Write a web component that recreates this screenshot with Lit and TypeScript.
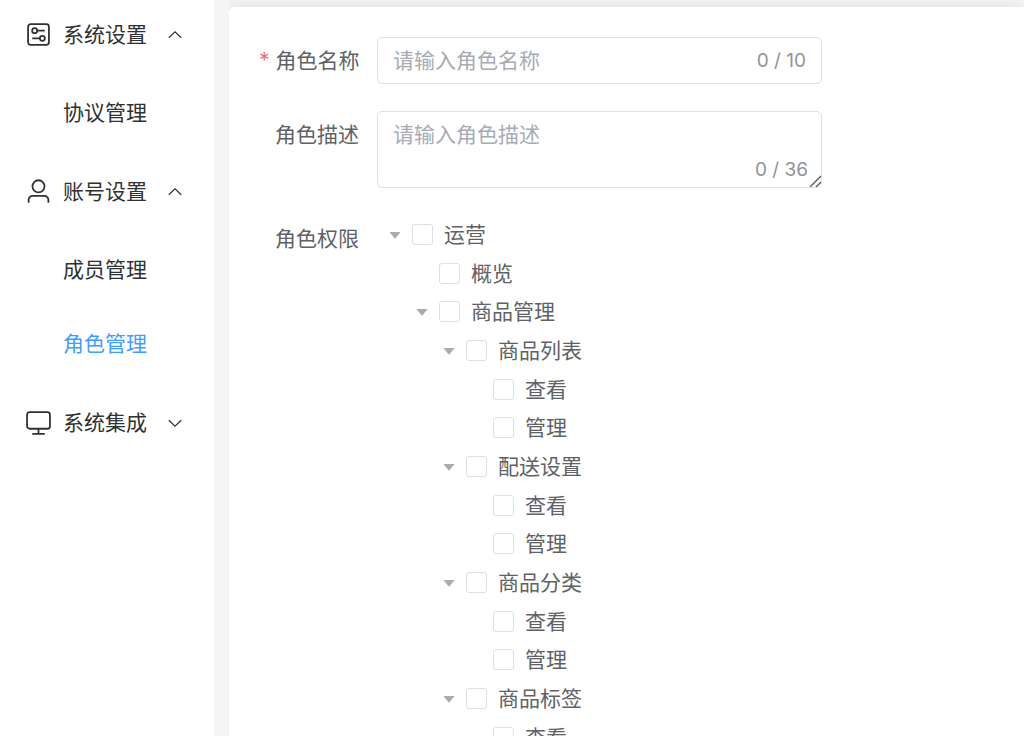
import { LitElement, html, svg, css, nothing } from "lit";
import { customElement, property, state } from "lit/decorators.js";

interface Permission {
  id: string;
  label: string;
  children?: Permission[];
}

interface MenuGroup {
  label: string;
  icon: "setup" | "user" | "monitor";
  open: boolean;
  items: string[];
}

const viewAndManage = (id: string): Permission[] => [
  { id: `${id}-view`, label: "查看" },
  { id: `${id}-manage`, label: "管理" },
];

const PERMISSIONS: Permission[] = [
  {
    id: "ops",
    label: "运营",
    children: [
      { id: "overview", label: "概览" },
      {
        id: "goods",
        label: "商品管理",
        children: [
          { id: "list", label: "商品列表", children: viewAndManage("list") },
          { id: "delivery", label: "配送设置", children: viewAndManage("delivery") },
          { id: "category", label: "商品分类", children: viewAndManage("category") },
          { id: "tag", label: "商品标签", children: viewAndManage("tag") },
        ],
      },
    ],
  },
];

const ICONS = {
  setup: svg`
    <rect x="2" y="2" width="20" height="20" rx="2.5"></rect>
    <circle cx="8.3" cy="8.3" r="2.4"></circle>
    <path d="M10.7 8.3H18M6 15.7h7.3"></path>
    <circle cx="15.7" cy="15.7" r="2.4"></circle>`,
  user: svg`
    <circle cx="12" cy="7" r="5.8"></circle>
    <path d="M2.500 22.800v-2.800a3.800 3.800 0 0 1 3.800-3.800h11.400a3.800 3.800 0 0 1 3.800 3.800v2.800"></path>`,
  monitor: svg`
    <rect x="1" y="2" width="22" height="16" rx="2.5"></rect>
    <path d="M12 18v5M6 23h12"></path>`,
};

@customElement("side-menu")
export class SideMenu extends LitElement {
  @state() private groups: MenuGroup[] = [
    { label: "系统设置", icon: "setup", open: true, items: ["协议管理"] },
    { label: "账号设置", icon: "user", open: true, items: ["成员管理", "角色管理"] },
    { label: "系统集成", icon: "monitor", open: false, items: [] },
  ];
  @state() private active = "角色管理";

  static styles = css`
    :host {
      display: block;
      background: #fff;
      overflow: hidden;
    }
    .menu {
      margin-top: -7px;
    }
    .group {
      display: flex;
      align-items: center;
      width: 100%;
      height: 83px;
      padding: 0 32px 0 26px;
      border: 0;
      background: none;
      font: inherit;
      color: #303133;
      cursor: pointer;
    }
    .text {
      padding-bottom: 4px;
    }
    .icon {
      width: 25px;
      height: 25px;
      margin-right: 12px;
      fill: none;
      stroke: currentColor;
      stroke-width: 1.7;
    }
    .arrow {
      width: 14px;
      height: 14px;
      margin-left: auto;
      fill: none;
      stroke: currentColor;
      stroke-width: 1.2;
    }
    .arrow.open {
      transform: rotate(180deg);
    }
    .item {
      display: flex;
      align-items: center;
      height: 74px;
      padding-left: 63px;
      color: #303133;
      text-decoration: none;
    }
    .item.active {
      color: #409eff;
    }
  `;

  private toggle(group: MenuGroup) {
    this.groups = this.groups.map((g) => (g === group ? { ...g, open: !g.open } : g));
  }

  render() {
    return html`<nav class="menu">
      ${this.groups.map(
        (g) => html`
          <button class="group" aria-expanded=${g.open} @click=${() => this.toggle(g)}>
            <svg class="icon" viewBox="0 0 24 24" aria-hidden="true">${ICONS[g.icon]}</svg>
            <span class="text">${g.label}</span>
            <svg class="arrow ${g.open ? "open" : ""}" viewBox="0 0 14 14" aria-hidden="true">
              <path d="M.8 4.200 7 10.200 13.200 4.200"></path>
            </svg>
          </button>
          ${g.open
            ? g.items.map(
                (item) => html`<a
                  class="item ${item === this.active ? "active" : ""}"
                  href="#"
                  @click=${() => (this.active = item)}
                  ><span class="text">${item}</span></a
                >`
              )
            : nothing}
        `
      )}
    </nav>`;
  }
}

@customElement("permission-tree")
export class PermissionTree extends LitElement {
  @property({ attribute: false }) nodes: Permission[] = [];
  @state() private collapsed = new Set<string>();

  static styles = css`
    :host {
      display: block;
    }
    .row {
      display: flex;
      align-items: center;
      height: 38px;
    }
    .toggle {
      display: flex;
      align-items: center;
      justify-content: center;
      box-sizing: border-box;
      width: 35px;
      height: 38px;
      padding: 2px 0 0;
      border: 0;
      background: none;
      cursor: pointer;
    }
    .caret {
      width: 12px;
      height: 8px;
      fill: #a8abb2;
    }
    .toggle.closed .caret {
      transform: rotate(-90deg);
    }
    .spacer {
      width: 35px;
    }
    .choice {
      display: flex;
      align-items: center;
      gap: 11px;
      cursor: pointer;
    }
    .text {
      padding-bottom: 3px;
    }
    .box {
      appearance: none;
      width: 21px;
      height: 21px;
      margin: 0;
      border: 1px solid #dcdfe6;
      border-radius: 3px;
      background: #fff;
    }
    .box:checked {
      border-color: #409eff;
      background: #409eff;
    }
    .children {
      padding: 1px 0 1px 27px;
    }
  `;

  private toggle(id: string) {
    const next = new Set(this.collapsed);
    if (!next.delete(id)) next.add(id);
    this.collapsed = next;
  }

  private renderNode(node: Permission): unknown {
    const closed = this.collapsed.has(node.id);
    return html`<div class="node">
      <div class="row">
        ${node.children
          ? html`<button
              type="button"
              class="toggle ${closed ? "closed" : ""}"
              aria-label=${node.label}
              aria-expanded=${!closed}
              @click=${() => this.toggle(node.id)}
            >
              <svg class="caret" viewBox="0 0 12 8" aria-hidden="true">
                <path d="M1 1h10q.6 0 .2.6L6.5 7.2q-.5.5-1 0L.8 1.6Q.4 1 1 1z"></path>
              </svg>
            </button>`
          : html`<span class="spacer"></span>`}
        <label class="choice">
          <input class="box" type="checkbox" name=${node.id} />
          <span class="text">${node.label}</span>
        </label>
      </div>
      ${node.children && !closed
        ? html`<div class="children">${node.children.map((c) => this.renderNode(c))}</div>`
        : nothing}
    </div>`;
  }

  render() {
    return this.nodes.map((n) => this.renderNode(n));
  }
}

@customElement("role-form")
export class RoleForm extends LitElement {
  @state() private name = "";
  @state() private description = "";

  static styles = css`
    :host {
      display: block;
      color: #606266;
    }
    .form {
      display: grid;
      grid-template-columns: 118px minmax(0, 445px);
      row-gap: 27px;
    }
    .label {
      padding-right: 18px;
      line-height: 45px;
      text-align: right;
      white-space: nowrap;
    }
    .required::before {
      content: "*";
      margin-right: 6px;
      font-family: Inter, sans-serif;
      color: #f56c6c;
    }
    .field {
      display: flex;
      align-items: center;
      box-sizing: border-box;
      height: 47px;
      padding: 0 15px;
      border: 1px solid #dcdfe6;
      border-radius: 5px;
    }
    .input {
      flex: 1;
      min-width: 0;
      padding: 0 0 4px;
      border: 0;
      outline: 0;
      background: none;
      font: inherit;
      color: inherit;
    }
    .area {
      position: relative;
    }
    .textarea {
      display: block;
      box-sizing: border-box;
      width: 100%;
      height: 77px;
      padding: 6px 15px;
      border: 1px solid #dcdfe6;
      border-radius: 5px;
      outline: 0;
      background: none;
      font: inherit;
      line-height: 31px;
      color: inherit;
      resize: vertical;
    }
    .textarea::-webkit-resizer {
      background: url("data:image/svg+xml,%3Csvg xmlns='http://www.w3.org/2000/svg' width='15' height='15'%3E%3Cpath d='M4 15 15 4M10 15l5-5' stroke='%23555' stroke-width='1.3'/%3E%3C/svg%3E")
        no-repeat right bottom;
    }
    ::placeholder {
      color: #a8abb2;
      opacity: 1;
    }
    .count {
      font-family: Inter, "Liberation Sans", sans-serif;
      font-size: 19px;
      line-height: 20px;
      color: #909399;
    }
    .area .count {
      position: absolute;
      right: 14px;
      bottom: 8px;
      pointer-events: none;
    }
  `;

  render() {
    return html`<form class="form">
      <label class="label required" for="name">角色名称</label>
      <div class="field">
        <input
          class="input"
          id="name"
          maxlength="10"
          placeholder="请输入角色名称"
          .value=${this.name}
          @input=${(e: Event) => (this.name = (e.target as HTMLInputElement).value)}
        />
        <span class="count">${this.name.length} / 10</span>
      </div>

      <label class="label" for="description">角色描述</label>
      <div class="area">
        <textarea
          class="textarea"
          id="description"
          maxlength="36"
          placeholder="请输入角色描述"
          .value=${this.description}
          @input=${(e: Event) => (this.description = (e.target as HTMLTextAreaElement).value)}
        ></textarea>
        <span class="count">${this.description.length} / 36</span>
      </div>

      <span class="label">角色权限</span>
      <permission-tree .nodes=${PERMISSIONS}></permission-tree>
    </form>`;
  }
}

@customElement("app-root")
export class AppRoot extends LitElement {
  static styles = css`
    :host {
      display: flex;
      height: 100vh;
      overflow: hidden;
      background: #f5f5f5;
      font-family: "Noto Sans CJK SC", sans-serif;
      font-size: 21px;
      line-height: 30px;
    }
    .side {
      flex: 0 0 214px;
    }
    .main {
      flex: 1;
      min-width: 0;
      padding: 7px 0 0 15px;
    }
    .card {
      display: block;
      min-height: 100%;
      box-sizing: border-box;
      padding: 30px;
      border-radius: 6px 0 0 0;
      background: #fff;
      box-shadow: 0 0 18px rgba(0, 0, 0, 0.1);
      clip-path: inset(-7px 0 0 0);
    }
  `;

  render() {
    return html`
      <side-menu class="side"></side-menu>
      <main class="main"><role-form class="card"></role-form></main>
    `;
  }
}
